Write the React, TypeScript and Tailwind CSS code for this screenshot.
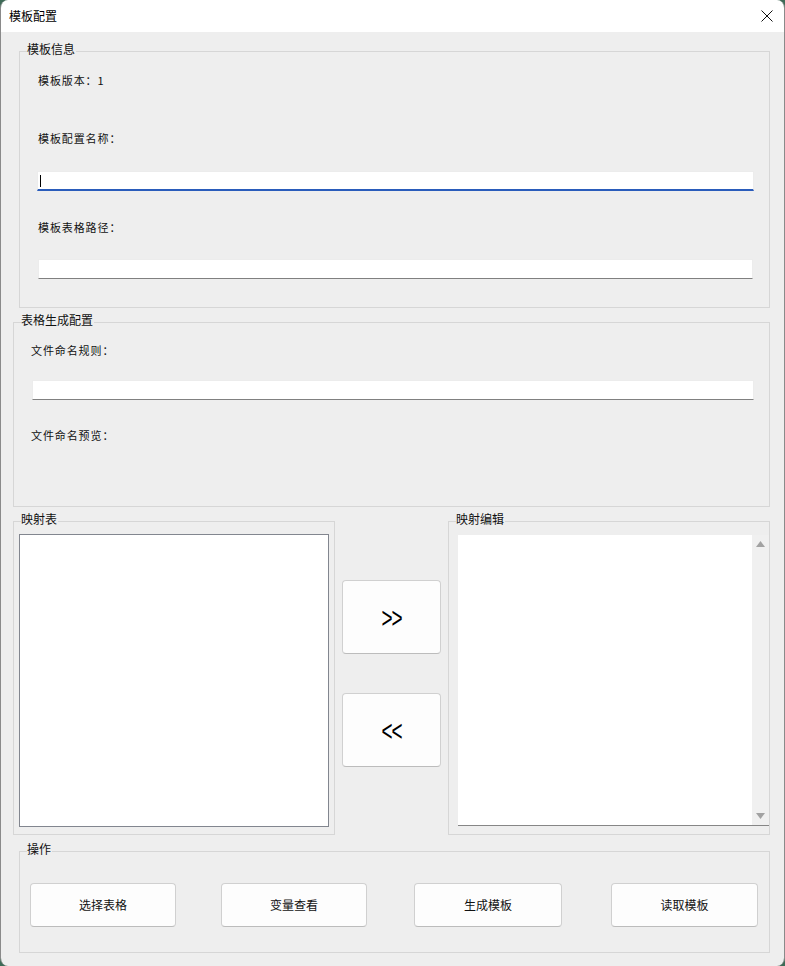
import React from 'react';

const font = "font-['Noto_Sans_CJK_SC','Microsoft_YaHei',sans-serif]";

// group box with its caption laid over the top border
const Group = ({ title, className, children }: any) => (
  <div className={`relative border border-[#d6d6d6] ${className}`}>
    <span className="absolute left-[7px] top-[-11px] bg-[#eeeeee] pr-[1px] text-[12px] leading-[16px] text-[#111]">
      {title}
    </span>
    {children}
  </div>
);

const Label = ({ children, className }: any) => (
  <div className={`text-[11px] leading-[16px] tracking-[0.9px] text-[#111] ${className}`}>{children}</div>
);

const TextBox = ({ className, focused = false }: any) => (
  <div
    className={`relative h-[20px] bg-white border border-[#ececec] ${
      focused ? 'border-b-2 border-b-[#2a5cbb]' : 'border-b border-b-[#808080]'
    } ${className}`}
  >
    {focused && <div className="absolute left-[2px] top-[3px] w-px h-[12px] bg-black" />}
  </div>
);

const Button = ({ children, className }: any) => (
  <button
    className={`flex items-center justify-center bg-[#fdfdfd] border border-[#d0d0d0] border-b-[#bcbcbc] rounded-[4px] text-[#111] ${className}`}
  >
    {children}
  </button>
);

export default function App() {
  return (
    <div className={`w-[785px] h-[966px] bg-[#3e6b57] ${font}`}>
      <div className="w-[785px] h-[966px] rounded-[8px] overflow-hidden border-x border-[#8a8a8a] flex flex-col">
        {/* title bar */}
        <div className="h-[32px] bg-white flex items-center justify-between pl-[8px] pr-[10px] shrink-0">
          <span className="text-[12px] text-black">模板配置</span>
          <svg width="12" height="12" viewBox="0 0 12 12" className="mr-[1px]">
            <path d="M0.5 0.5 L11.5 11.5 M11.5 0.5 L0.5 11.5" stroke="#111" strokeWidth="1" fill="none" />
          </svg>
        </div>

        {/* body */}
        <div className="flex-1 bg-[#eeeeee] flex flex-col">
          <Group title="模板信息" className="mt-[19px] ml-[18px] w-[751px] h-[257px] flex flex-col">
            <Label className="mt-[20px] ml-[18px]">模板版本：1</Label>
            <Label className="mt-[42px] ml-[18px]">模板配置名称：</Label>
            <TextBox focused className="mt-[25px] ml-[17px] w-[717px]" />
            <Label className="mt-[28px] ml-[18px]">模板表格路径：</Label>
            <TextBox className="mt-[24px] ml-[18px] w-[715px]" />
          </Group>

          <Group title="表格生成配置" className="mt-[14px] ml-[12px] w-[757px] h-[185px] flex flex-col">
            <Label className="mt-[19px] ml-[17px]">文件命名规则：</Label>
            <TextBox className="mt-[22px] ml-[18px] w-[722px]" />
            <Label className="mt-[27px] ml-[17px]">文件命名预览：</Label>
          </Group>

          <div className="mt-[14px] ml-[12px] flex h-[314px]">
            <Group title="映射表" className="w-[322px] h-[314px]">
              <div className="mt-[12px] ml-[5px] w-[310px] h-[293px] bg-white border border-[#82868f]" />
            </Group>

            <div className="ml-[7px] w-[99px] flex flex-col">
              <Button className="mt-[59px] h-[74px]">
                <span className="font-['Liberation_Sans',sans-serif] text-[19px] leading-none tracking-[-1px] scale-y-[1.6] text-black">&gt;&gt;</span>
              </Button>
              <Button className="mt-[39px] h-[74px]">
                <span className="font-['Liberation_Sans',sans-serif] text-[19px] leading-none tracking-[-1px] scale-y-[1.6] text-black">&lt;&lt;</span>
              </Button>
            </div>

            <Group title="映射编辑" className="ml-[7px] w-[322px] h-[314px]">
              <div className="mt-[13px] ml-[9px] w-[311px] h-[291px] bg-white border-b border-[#868686] flex justify-end">
                <div className="w-[17px] h-full bg-[#f0f0f0] flex flex-col items-center justify-between py-[6px]">
                  <svg width="9" height="6" viewBox="0 0 9 6">
                    <path d="M4.5 0 L9 6 L0 6 Z" fill="#a2a2a2" />
                  </svg>
                  <svg width="9" height="6" viewBox="0 0 9 6">
                    <path d="M0 0 L9 0 L4.5 6 Z" fill="#a2a2a2" />
                  </svg>
                </div>
              </div>
            </Group>
          </div>

          <Group title="操作" className="mt-[16px] ml-[18px] w-[751px] h-[102px]">
            <div className="mt-[31px] pl-[10px] flex">
              <Button className="w-[146px] h-[44px] text-[12px]">选择表格</Button>
              <Button className="ml-[45px] w-[146px] h-[44px] text-[12px]">变量查看</Button>
              <Button className="ml-[47px] w-[148px] h-[44px] text-[12px]">生成模板</Button>
              <Button className="ml-[49px] w-[147px] h-[44px] text-[12px]">读取模板</Button>
            </div>
          </Group>
        </div>
      </div>
    </div>
  );
}
